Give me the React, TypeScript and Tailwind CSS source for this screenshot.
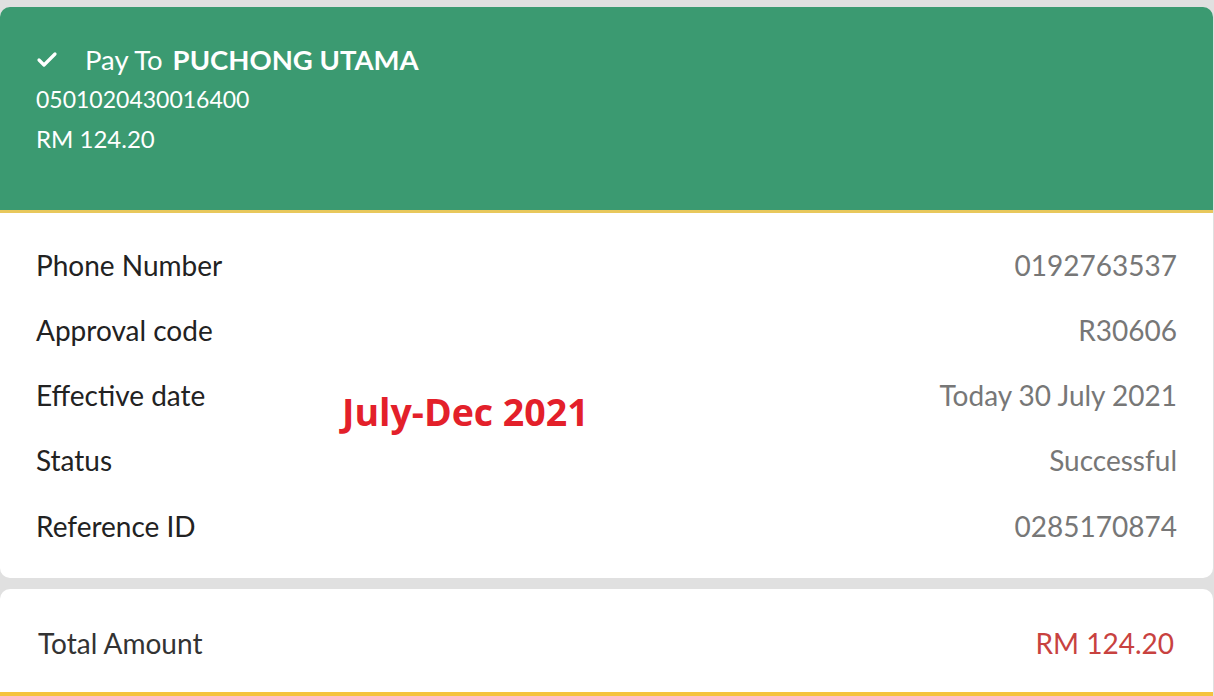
import { Check } from "lucide-react";

const rows = [
  { label: "Phone Number", value: "0192763537" },
  { label: "Approval code", value: "R30606" },
  { label: "Effective date", value: "Today 30 July 2021" },
  { label: "Status", value: "Successful" },
  { label: "Reference ID", value: "0285170874" },
];

export default function App() {
  return (
    <div className="h-[696px] overflow-hidden bg-[#e0e0e0] pt-[7px] pr-[1px] font-['Lato',sans-serif]">
      <div className="relative">
        {/* header */}
        <div className="h-[206px] rounded-t-[10px] border-b-[3px] border-[#e8c85c] bg-[#3b9a71] px-9 pt-[33px] text-white">
          <div className="flex h-[40px] items-center">
            <Check className="ml-[-1px] mr-[26px] h-[24px] w-[24px]" strokeWidth={3.2} />
            <span className="text-[27.5px]">Pay To</span>
            <span className="ml-[10px] text-[27.5px] font-bold">PUCHONG UTAMA</span>
          </div>
          <div className="flex h-[39px] items-center text-[23px]">0501020430016400</div>
          <div className="flex h-[39px] items-center text-[24px]">RM 124.20</div>
        </div>

        {/* details */}
        <div className="h-[365px] rounded-b-[10px] bg-white px-9 pt-[19px]">
          {rows.map((r) => (
            <div key={r.label} className="flex h-[65.25px] items-center justify-between text-[28px]">
              <span className="text-[#222]">{r.label}</span>
              <span className="text-[#777]">{r.value}</span>
            </div>
          ))}
        </div>

        <div className="absolute left-[342px] top-[386px] text-[37.5px] font-bold leading-none text-[#e3202a] font-['Open_Sans',sans-serif]">
          July-Dec 2021
        </div>
      </div>

      {/* total */}
      <div className="mt-[11px] h-[107px] rounded-t-[10px] border-b-4 border-[#f5c33e] bg-white pl-[38px] pr-[39px] pt-[34px]">
        <div className="flex h-[40px] items-center justify-between text-[28px]">
          <span className="text-[#333]">Total Amount</span>
          <span className="text-[#c8423f]">RM 124.20</span>
        </div>
      </div>
    </div>
  );
}
